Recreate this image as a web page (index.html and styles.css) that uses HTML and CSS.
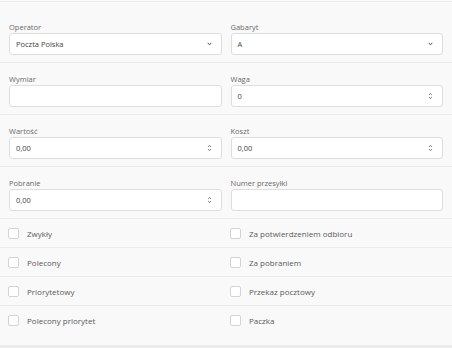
FILE: index.html
```html
<!DOCTYPE html>
<html lang="pl">
<head>
<meta charset="utf-8">
<link rel="stylesheet" href="styles.css">
</head>
<body>
<div class="page">
  <div class="head"></div>

  <div class="row">
    <div class="field">
      <div class="label">Operator</div>
      <div class="input"><span class="val">Poczta Polska</span>
        <svg class="chev" width="5" height="4" viewBox="0 0 5 4"><path d="M0.7 0.9 L2.5 2.8 L4.3 0.9" fill="none" stroke="#444" stroke-width="1"/></svg>
      </div>
    </div>
    <div class="field">
      <div class="label">Gabaryt</div>
      <div class="input"><span class="val">A</span>
        <svg class="chev" width="5" height="4" viewBox="0 0 5 4"><path d="M0.7 0.9 L2.5 2.8 L4.3 0.9" fill="none" stroke="#444" stroke-width="1"/></svg>
      </div>
    </div>
  </div>

  <div class="row">
    <div class="field">
      <div class="label">Wymiar</div>
      <div class="input"></div>
    </div>
    <div class="field">
      <div class="label">Waga</div>
      <div class="input"><span class="val">0</span>
        <svg class="spin" width="5" height="8" viewBox="0 0 5 8"><path d="M1 3 L2.5 1.3 L4 3 M1 5 L2.5 6.7 L4 5" fill="none" stroke="#777" stroke-width="0.9"/></svg>
      </div>
    </div>
  </div>

  <div class="row">
    <div class="field">
      <div class="label">Wartość</div>
      <div class="input"><span class="val">0,00</span>
        <svg class="spin" width="5" height="8" viewBox="0 0 5 8"><path d="M1 3 L2.5 1.3 L4 3 M1 5 L2.5 6.7 L4 5" fill="none" stroke="#777" stroke-width="0.9"/></svg>
      </div>
    </div>
    <div class="field">
      <div class="label">Koszt</div>
      <div class="input"><span class="val">0,00</span>
        <svg class="spin" width="5" height="8" viewBox="0 0 5 8"><path d="M1 3 L2.5 1.3 L4 3 M1 5 L2.5 6.7 L4 5" fill="none" stroke="#777" stroke-width="0.9"/></svg>
      </div>
    </div>
  </div>

  <div class="row">
    <div class="field">
      <div class="label">Pobranie</div>
      <div class="input"><span class="val">0,00</span>
        <svg class="spin" width="5" height="8" viewBox="0 0 5 8"><path d="M1 3 L2.5 1.3 L4 3 M1 5 L2.5 6.7 L4 5" fill="none" stroke="#777" stroke-width="0.9"/></svg>
      </div>
    </div>
    <div class="field">
      <div class="label">Numer przesyłki</div>
      <div class="input"></div>
    </div>
  </div>

  <div class="crow">
    <div class="check"><span class="box"></span><span>Zwykły</span></div>
    <div class="check"><span class="box"></span><span>Za potwierdzeniem odbioru</span></div>
  </div>
  <div class="crow">
    <div class="check"><span class="box"></span><span>Polecony</span></div>
    <div class="check"><span class="box"></span><span>Za pobraniem</span></div>
  </div>
  <div class="crow">
    <div class="check"><span class="box"></span><span>Priorytetowy</span></div>
    <div class="check"><span class="box"></span><span>Przekaz pocztowy</span></div>
  </div>
  <div class="crow last">
    <div class="check"><span class="box"></span><span>Polecony priorytet</span></div>
    <div class="check"><span class="box"></span><span>Paczka</span></div>
  </div>
  <div class="foot"></div>
</div>
</body>
</html>
```

FILE: styles.css
```css
html, body {
  margin: 0;
  padding: 0;
  background: #f9f9f9;
}
body {
  font-family: "Open Sans", "Noto Sans", sans-serif;
  color: #555;
  width: 452px;
  height: 348px;
  overflow: hidden;
}
.page {
  display: flex;
  flex-direction: column;
}
.head {
  margin-top: 1px;
  border-top: 1px solid #ececec;
  height: 9px;
}
.row {
  display: grid;
  grid-template-columns: 1fr 1fr;
  column-gap: 9px;
  padding: 11px 9px 7px 9px;
  border-bottom: 1px solid #ebebeb;
}
.field {
  display: flex;
  flex-direction: column;
}
.label {
  font-size: 7.5px;
  line-height: 10px;
  height: 10px;
  color: #6a6a6a;
  margin-bottom: 1px;
  white-space: nowrap;
}
.input {
  height: 22px;
  box-sizing: border-box;
  background: #fff;
  border: 1px solid #dedede;
  border-radius: 3px;
  display: flex;
  align-items: center;
  padding: 0 7px 0 6px;
}
.val {
  flex: 1;
  font-size: 7.5px;
  color: #444;
}
.chev { margin-left: auto; margin-right: 2px; }
.spin { margin-left: auto; margin-right: 2px; }
.crow {
  display: grid;
  grid-template-columns: 1fr 1fr;
  column-gap: 9px;
  height: 28px;
  padding: 0 9px 0 8px;
  border-bottom: 1px solid #ebebeb;
  align-items: center;
}
.crow.last {
  border-bottom: none;
  padding-bottom: 11px;
  align-items: start;
}
.crow.last .check {
  height: 28px;
}
.check {
  display: flex;
  align-items: center;
  font-size: 8px;
  color: #5a5a5a;
  white-space: nowrap;
}
.box {
  width: 11px;
  height: 11px;
  box-sizing: border-box;
  border: 1px solid #d4d4d4;
  border-radius: 2px;
  background: #fff;
  margin-right: 8px;
  flex: none;
}
.foot {
  height: 4px;
  background: #ececec;
}
```
